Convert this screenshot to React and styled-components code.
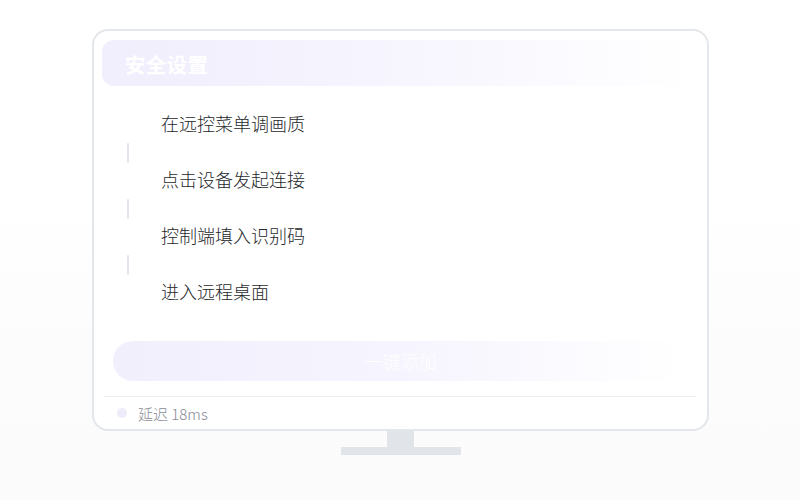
import React from "react";
import styled, { createGlobalStyle } from "styled-components";

const Global = createGlobalStyle`
  html, body { margin: 0; padding: 0; min-height: 100%; }
  body {
    min-height: 500px;
    background: linear-gradient(180deg, #ffffff 0%, #ffffff 40%, #fcfcfd 70%, #fbfbfc 100%);
    font-family: "Noto Sans CJK SC", "Noto Sans", sans-serif;
  }
`;

const Page = styled.div`
  display: flex;
  flex-direction: column;
  align-items: center;
  padding-top: 29px;
  padding-left: 1px;
`;

const Monitor = styled.div`
  width: 617px;
  height: 402px;
  box-sizing: border-box;
  border: 2px solid #e3e6ea;
  border-radius: 16px;
  background: #ffffff;
  display: flex;
  flex-direction: column;
`;

const Header = styled.div`
  margin: 9px 8px 0;
  height: 46px;
  border-radius: 12px;
  background: linear-gradient(90deg, #f1eefd 0%, #f6f4fe 45%, #ffffff 100%);
  display: flex;
  align-items: center;
  padding: 2px 0 0 23px;
  box-sizing: border-box;
`;

const Title = styled.div`
  color: #ffffff;
  font-size: 20.5px;
  font-weight: 600;
  letter-spacing: 0.3px;
`;

const Steps = styled.div`
  margin-top: 21px;
  padding-left: 33px;
  display: flex;
  flex-direction: column;
`;

const StepText = styled.div`
  height: 36px;
  box-sizing: border-box;
  line-height: 33px;
  padding: 0 0 2px 34px;
  font-size: 18px;
  font-weight: 300;
  color: #26282b;
`;

const Connector = styled.div`
  width: 2px;
  height: 20px;
  background: #e3e4ec;
  border-radius: 1px;
`;

const Button = styled.div`
  margin: 30px 19px 0;
  height: 40px;
  border-radius: 20px;
  background: linear-gradient(90deg, #f2effd 0%, #f6f4fe 50%, #ffffff 100%);
  color: #ffffff;
  font-size: 18px;
  font-weight: 300;
  display: flex;
  align-items: center;
  justify-content: center;
`;

const Divider = styled.div`
  margin: 15px 11px 0 10px;
  height: 1px;
  background: #eceef1;
`;

const Footer = styled.div`
  flex: 1;
  display: flex;
  align-items: center;
  padding-left: 23px;
  gap: 11px;
`;

const Dot = styled.span`
  width: 10px;
  height: 10px;
  border-radius: 50%;
  background: #eeebfb;
`;

const Latency = styled.span`
  font-size: 15px;
  font-weight: 300;
  color: #868a93;
`;

const Neck = styled.div`
  width: 27px;
  height: 16px;
  background: #e1e4e8;
`;

const Base = styled.div`
  width: 120px;
  height: 8px;
  background: #e1e4e8;
`;

const steps = ["在远控菜单调画质", "点击设备发起连接", "控制端填入识别码", "进入远程桌面"];

export default function App() {
  return (
    <>
      <Global />
      <Page>
        <Monitor>
          <Header>
            <Title>安全设置</Title>
          </Header>
          <Steps>
            {steps.map((s, i) => (
              <React.Fragment key={s}>
                <StepText>{s}</StepText>
                {i < steps.length - 1 && <Connector />}
              </React.Fragment>
            ))}
          </Steps>
          <Button>一键添加</Button>
          <Divider />
          <Footer>
            <Dot />
            <Latency>延迟 18ms</Latency>
          </Footer>
        </Monitor>
        <Neck />
        <Base />
      </Page>
    </>
  );
}
